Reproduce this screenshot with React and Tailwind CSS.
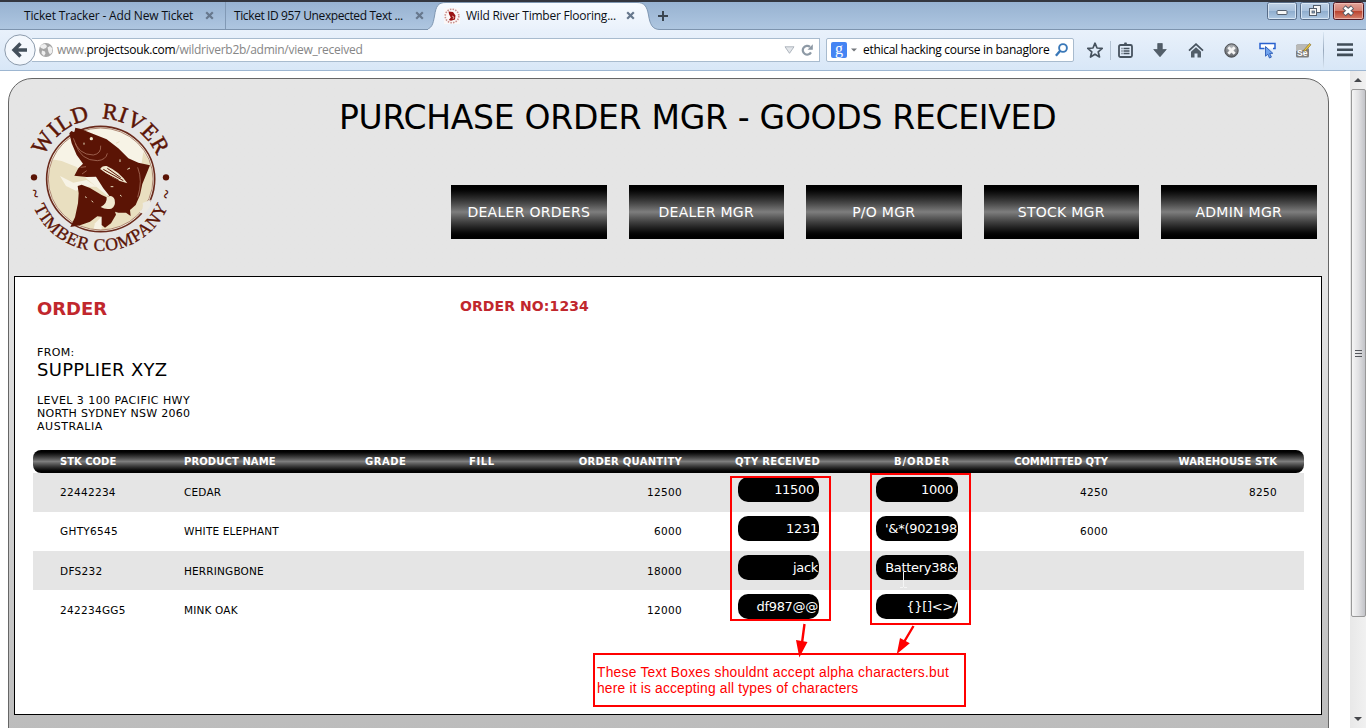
import React from "react";

const UI = "font-['Open_Sans','Noto_Sans',sans-serif]";

function CloseX({ className = "" }) {
  return (
    <svg className={"shrink-0 " + className} width="9" height="9" viewBox="0 0 9 9">
      <path d="M1.2 1.2 7.8 7.8M7.8 1.2 1.2 7.8" stroke="#67788d" strokeWidth="2.2" />
    </svg>
  );
}

function Favicon() {
  return (
    <svg width="16" height="16" viewBox="0 0 16 16" className="shrink-0">
      <rect width="16" height="16" fill="#fbf8f8" />
      <circle cx="8" cy="8" r="6.8" fill="none" stroke="#c98f8d" strokeWidth="1.6" strokeDasharray="1.5 1.2" />
      <path d="M4.5 3.5 9 4l2.5 3.5-.5 4-4 1.2-2.2-.7 2-2.6-1.6-2.8z" fill="#9b1313" />
      <path d="M8 8l2 1-1 2" stroke="#e7c0b8" fill="none" strokeWidth=".8" />
    </svg>
  );
}

function TabBar() {
  return (
    <div className={"flex h-[30px] shrink-0 items-center border-t-2 border-b border-t-[#33363f] border-b-[#7d94ae] bg-linear-to-b from-[#97b2d1] to-[#aec6e0] text-[12px] text-[#0b0f15] " + UI}>
      <div className="flex h-full w-[226px] items-center border-r border-[#8199b5] pl-6">
        <span className="w-[181px] whitespace-nowrap tracking-[-0.16px]">Ticket Tracker - Add New Ticket</span>
        <CloseX />
      </div>
      <div className="flex h-full w-[202px] items-center pl-2">
        <span className="w-[181px] whitespace-nowrap tracking-[-0.39px]">Ticket ID 957 Unexpected Text ...</span>
        <CloseX />
      </div>
      <div className="relative flex h-full w-[230px] items-center">
        <svg className="absolute left-0 top-[-1px]" width="232" height="29" viewBox="0 0 232 29">
          <defs>
            <linearGradient id="tabfill" x1="0" y1="0" x2="0" y2="1">
              <stop offset="0" stopColor="#f7fbff" />
              <stop offset="1" stopColor="#e9f1fb" />
            </linearGradient>
          </defs>
          <path d="M-4 28.5C4 28.5 5 23 6.500 15C8 5 10 1.500 18 1.500H209C216 1.500 219 5 220.500 14C222 23 224 28.500 232 28.500V30H-4Z" fill="url(#tabfill)" stroke="#7f97b2" />
          <path d="M2 29H226" stroke="#e9f1fb" strokeWidth="2" />
        </svg>
        <div className="relative flex items-center pl-4">
          <Favicon />
          <span className="w-[166px] whitespace-nowrap pl-[6px] tracking-[-0.23px]">Wild River Timber Flooring...</span>
          <CloseX />
        </div>
      </div>
      <svg width="10" height="10" viewBox="0 0 10 10" className="shrink-0">
        <path d="M5 0V10M0 5H10" stroke="#3b4651" strokeWidth="2" />
      </svg>
      <div className="ml-auto flex h-full items-start gap-[3px] pr-[2px]">
        <WinButton>
          <rect x="10" y="8.500" width="10" height="4" rx="1" fill="#f6f6f6" stroke="#545e6c" />
        </WinButton>
        <WinButton>
          <rect x="13.500" y="3.500" width="7" height="7" fill="#f6f6f6" stroke="#545e6c" />
          <rect x="9.500" y="6.500" width="7" height="7" fill="#f6f6f6" stroke="#545e6c" />
          <rect x="12" y="9" width="2.500" height="2" fill="#8ba5c3" stroke="#545e6c" strokeWidth=".8" />
        </WinButton>
        <svg width="31" height="18" viewBox="0 0 31 18">
          <defs>
            <linearGradient id="closefill" x1="0" y1="0" x2="0" y2="1">
              <stop offset="0" stopColor="#e5a79d" />
              <stop offset=".48" stopColor="#d27f72" />
              <stop offset=".5" stopColor="#b9412d" />
              <stop offset="1" stopColor="#d98674" />
            </linearGradient>
          </defs>
          <rect x=".5" y=".5" width="30" height="17" rx="2" fill="url(#closefill)" stroke="#4d1722" />
          <rect x="1.500" y="1.500" width="28" height="15" rx="1" fill="none" stroke="#f2c9c2" strokeOpacity=".7" />
          <path d="M11 5 19.500 12.500M19.500 5 11 12.500" stroke="#535965" strokeWidth="4.800" />
          <path d="M11.500 5.500 19 12M19 5.500 11.500 12" stroke="#fff" strokeWidth="2.800" />
        </svg>
      </div>
    </div>
  );
}

function WinButton({ children }) {
  return (
    <svg width="30" height="18" viewBox="0 0 30 18">
      <defs>
        <linearGradient id="winfill" x1="0" y1="0" x2="0" y2="1">
          <stop offset="0" stopColor="#c0d2e7" />
          <stop offset=".48" stopColor="#a9c1dc" />
          <stop offset=".5" stopColor="#8eaccd" />
          <stop offset="1" stopColor="#b1cae4" />
        </linearGradient>
      </defs>
      <rect x=".5" y=".5" width="29" height="17" rx="2" fill="url(#winfill)" stroke="#566b87" />
      <rect x="1.500" y="1.500" width="27" height="15" rx="1" fill="none" stroke="#e1ecf8" strokeOpacity=".8" />
      {children}
    </svg>
  );
}

function ToolIcons() {
  return (
    <div className="ml-[13px] flex h-full flex-1 items-center">
      <svg width="16" height="16" viewBox="0 0 16 16">
        <path d="M8 1.200 10 6l5.200.4-4 3.400 1.300 5.200L8 12.200 3.500 15l1.300-5.200-4-3.400L6 6z" fill="none" stroke="#46525e" strokeWidth="1.700" strokeLinejoin="round" />
      </svg>
      <div className="ml-[7px] h-[19px] w-px bg-[#b4c3d3]" />
      <svg className="ml-[7px]" width="15" height="16" viewBox="0 0 15 16">
        <rect x="1" y="3" width="13" height="12" rx="1.500" fill="none" stroke="#46525e" strokeWidth="1.800" />
        <path d="M4 3.500V2H6l.5-1.500h2L9 2h2v1.500z" fill="#46525e" />
        <path d="M3.500 6.500h1M5.500 6.500h6M3.500 9h1M5.500 9h6M3.500 11.500h1M5.500 11.500h6" stroke="#46525e" strokeWidth="1.400" />
      </svg>
      <svg className="ml-5" width="14" height="14" viewBox="0 0 14 14">
        <path d="M4.700.5h4.600v6h4L7 13.800.7 6.500h4z" fill="#525e69" stroke="#3b4652" strokeWidth=".6" />
      </svg>
      <svg className="ml-[21px]" width="16" height="15" viewBox="0 0 16 15">
        <path d="M1 7.600 8 1.200l7 6.400" stroke="#46525e" strokeWidth="1.800" fill="none" />
        <path d="M3 8.700 8 4.200l5 4.500V14.500H9.500v-4h-3v4H3z" fill="#525e69" />
      </svg>
      <svg className="ml-5" width="15" height="15" viewBox="0 0 15 15">
        <defs>
          <radialGradient id="ball" cx=".5" cy=".3" r=".7">
            <stop offset="0" stopColor="#b9bdc1" />
            <stop offset="1" stopColor="#5b5e63" />
          </radialGradient>
        </defs>
        <circle cx="7.500" cy="7.500" r="6.700" fill="url(#ball)" stroke="#4a4d51" />
        <path d="M4.300 4.300l6.400 6.400M10.700 4.300l-6.400 6.400" stroke="#f4f4f4" strokeWidth="2.800" />
      </svg>
      <svg className="ml-5" width="17" height="17" viewBox="0 0 17 17">
        <path d="M5.500 6.500H1v-5h15v5h-2" fill="#fff" stroke="#2a62cf" strokeWidth="1.500" />
        <path d="M6.500 4.500v9.700l2.300-2 1.700 3.800 1.900-.9-1.700-3.600 3.100-.2z" fill="#6fa3ee" stroke="#2a5ab5" strokeWidth=".9" />
      </svg>
      <svg className="ml-[19px]" width="17" height="16" viewBox="0 0 17 16">
        <rect x="1" y="2.500" width="13" height="13" rx="1.500" fill="#7d7d7d" />
        <path d="M1 4a1.500 1.500 0 0 1 1.500-1.500h10A1.500 1.500 0 0 1 14 4v3L1 9z" fill="#b9b9b7" />
        <text x="2" y="14" fontSize="8.500" fontWeight="bold" fontFamily="Liberation Sans, sans-serif" fill="#fff">Se</text>
        <path d="M8.500 8.500 14.500 1.500l1.500 1.300-6 6.500z" fill="#e9c53e" stroke="#7b6325" strokeWidth=".6" />
      </svg>
      <div className="ml-[11px] h-[37px] w-px bg-linear-to-b from-[#dce8f5] via-[#98a9bd] to-[#dce8f5]" />
      <svg className="ml-[13px]" width="16" height="14" viewBox="0 0 16 14">
        <path d="M0 1.500h16M0 6.700h16M0 11.900h16" stroke="#414d58" strokeWidth="2.600" />
      </svg>
    </div>
  );
}

function NavBar() {
  return (
    <div className={"flex h-[41px] shrink-0 items-center border-b border-[#9db6d1] bg-linear-to-b from-[#e9f1fb] to-[#d8e7f7] text-[12px] " + UI}>
      <svg className="relative ml-1 shrink-0" width="32" height="32" viewBox="0 0 32 32">
        <circle cx="16" cy="16" r="15.200" fill="#f4f8fd" stroke="#8c9bac" />
        <path d="M23 16H11M16.500 9.500 10 16l6.500 6.500" fill="none" stroke="#434f5b" strokeWidth="3.400" />
      </svg>
      <div className="-ml-1 flex h-6 w-[788px] shrink-0 items-center border border-l-0 border-[#a8bbce] bg-white pl-[6px] text-[#868686]">
        <svg width="16" height="16" viewBox="0 0 16 16" className="mr-[3px] shrink-0">
          <circle cx="8" cy="8" r="7" fill="#a5a5a5" />
          <path d="M4 2.500 7 2l2 2-1 2-2.500 1L3 6l-1-1.500zM9.500 5.500 12 4l2.500 2.500-.5 4-2 2-1.500-2.500zM4 8.500l3 1 .5 2L6 14l-2.500-2.500z" fill="#efefef" />
        </svg>
        <span className="whitespace-nowrap tracking-[-0.4px]">www.</span>
        <span className="whitespace-nowrap tracking-[-0.28px] text-black">projectsouk.com</span>
        <span className="whitespace-nowrap tracking-[-0.27px]">/wildriverb2b/admin/view_received</span>
        <svg className="ml-auto" width="11" height="8" viewBox="0 0 11 8">
          <path d="M1 .8h9L5.500 7.300z" fill="#e3e6ea" stroke="#a7afb8" strokeWidth=".9" />
        </svg>
        <svg className="ml-[6px] mr-[5px]" width="13" height="12" viewBox="0 0 13 12">
          <path d="M10 8.400A4.400 4.400 0 1 1 9 2.800" fill="none" stroke="#8d99a5" strokeWidth="2.200" />
          <path d="M11.800.3v5.400H6.500z" fill="#8d99a5" />
        </svg>
      </div>
      <div className="ml-[6px] flex h-6 w-[248px] shrink-0 items-center rounded-[2px] border border-[#a8bbce] bg-white pl-1">
        <span className="flex h-4 w-4 items-center justify-center rounded-[2px] bg-[#4484f3] pb-[3px] font-['Liberation_Serif',serif] text-[16px] leading-none text-white">g</span>
        <svg className="ml-1 mr-[6px]" width="6" height="4" viewBox="0 0 6 4"><path d="M0 .5h6L3 3.500z" fill="#73777c" /></svg>
        <span className="whitespace-nowrap tracking-[-0.3px] text-black">ethical hacking course in banaglore</span>
        <svg className="ml-auto mr-[5px]" width="13" height="14" viewBox="0 0 13 14">
          <circle cx="8" cy="5" r="3.900" fill="#fff" stroke="#3a78b8" strokeWidth="1.900" />
          <path d="M5.200 7.800.9 12.700" stroke="#3a78b8" strokeWidth="2.400" />
        </svg>
      </div>
      <ToolIcons />
    </div>
  );
}

function Logo() {
  return (
    <svg className="shrink-0" width="190" height="190" viewBox="0 0 570 570">
      <defs>
        <path id="arcTop" d="M89 350L89 297A183 181 0 0 1 455 297L455 350" />
        <path id="arcBottom" d="M53 297A219 216 0 0 0 491 297" />
        <clipPath id="disc"><ellipse cx="272" cy="297" rx="155" ry="152" /></clipPath>
      </defs>
      <ellipse cx="272" cy="297" rx="162" ry="158" fill="#f7f3e6" stroke="#6a2a1c" strokeWidth="5" />
      <g clipPath="url(#disc)">
        <path d="M110 235l45 8 45 18 30 35 60 50 90 0 20-130 40 60v120l-90 70-60-10-30 10-90 10-80-100z" fill="#e9dfc0" />
        <path d="M150 288l40 20 40-8 30 20-30 0-32 12-30-14z" fill="#f7f3e6" />
        <path d="M255 430l20-20 0 40h-25z" fill="#f7f3e6" />
      </g>
      <ellipse cx="272" cy="297" rx="157" ry="153" fill="none" stroke="#8a5038" strokeWidth="2" />
      <path d="M178 160L184 153L193 157L196 143L213 147L235 156L290 178L325 205L355 235L385 248L420 256L408 285L397 312L390 345L377 375L360 390L362 408L348 398L325 398L315 395L318 404L303 430L285 443L275 435L275 410L262 409L240 425L210 436L181 441L195 412L204 370L206 340L203 318L215 314L240 324L275 345L290 352L298 347L280 325L258 290L230 291L193 287L205 265L219 251L200 225L185 190Z" fill="#5b1405" />
      <path d="M290 351q18-8 24 8 4 20-10 27-18 4-32-5 20-10 18-30z" fill="#f0e8cf" />
      <path d="M270 268q6-12 20-10 40 18 62 52-40-8-80-42z" fill="#f0e8cf" />
      <path d="M280 268l60 34M276 275l50 26M292 265l40 28" stroke="#5b1405" strokeWidth="3" />
      <path d="M190 175q14 50 60 50 24-4 22-28M196 190q16 52 66 52 26-2 30-22M383 262q16 40 0 90M212 262l16-2M230 272l-14 10" fill="none" stroke="#b98470" strokeWidth="2" />
      <circle cx="244" cy="176" r="5" fill="#f0e8cf" />
      <path d="M222 188v6M318 190l10-5M330 238v8M302 320h8M276 340l4 5M352 268l8-4M225 350l5 3M245 362l4 5M330 345l5 4" stroke="#e9dfc0" strokeWidth="3" />
      <path d="M388 395q14-8 10-26l24-10q4 24-22 44z" fill="#ece9e2" />
      <circle cx="72" cy="292" r="9.500" fill="#5b1405" />
      <circle cx="468" cy="292" r="9.500" fill="#5b1405" />
      <g fill="#5b1405" fontFamily="Liberation Serif, serif">
        <text fontSize="68" textLength="430" wordSpacing="16" stroke="#5b1405" strokeWidth="1.500"><textPath href="#arcTop" startOffset="123" textLength="430">WILD RIVER</textPath></text>
        <text fontSize="53" textLength="508" stroke="#5b1405" strokeWidth="1"><textPath href="#arcBottom" startOffset="88" textLength="508">TIMBER COMPANY</textPath></text>
        <text fontSize="50" fontWeight="bold" transform="translate(57 332) rotate(75)">~</text>
        <text fontSize="50" fontWeight="bold" transform="translate(481 359) rotate(-75)">~</text>
      </g>
    </svg>
  );
}

const NAV = ["DEALER ORDERS", "DEALER MGR", "P/O MGR", "STOCK MGR", "ADMIN MGR"];

function Header() {
  return (
    <header className="flex h-[197px] pl-px pt-px">
      <Logo />
      <div className="flex-1">
        <h1 className="mt-[16px] h-[44px] whitespace-nowrap pl-[139px] text-[33px] leading-[44px] tracking-[-0.28px] text-black">PURCHASE ORDER MGR - GOODS RECEIVED</h1>
        <nav className="mt-[45px] flex gap-[22px] pl-[251px]">
          {NAV.map((n) => (
            <a key={n} className="flex h-[54px] w-[155.5px] items-center justify-center bg-linear-to-b from-black via-[#7e7e7e] to-black text-[14px] tracking-[0.28px] text-white">{n}</a>
          ))}
        </nav>
      </div>
    </header>
  );
}

const COLS = "grid grid-cols-[124px_181px_104px_60px_153px_138px_138px_150px_169px] pl-[27px]";
const ROWS = [
  ["22442234", "CEDAR", "12500", "11500", "1000", "4250", "8250", true],
  ["GHTY6545", "WHITE ELEPHANT", "6000", "1231", "'&*(902198", "6000", "", false],
  ["DFS232", "HERRINGBONE", "18000", "jack", "Battery38&", "", "", false],
  ["242234GG5", "MINK OAK", "12000", "df987@@", "{}[]<>/", "", "", false],
];

function Pill({ value, padded, wide }) {
  return (
    <div className={"mt-1 flex h-[25px] items-center justify-end overflow-hidden whitespace-nowrap rounded-[10px] bg-black text-[13px] tracking-[-0.3px] text-white " + (wide ? "w-[82px] " : "w-[81px] ") + (padded ? "pr-[5px]" : "pr-[1px]")}>
      {value}
    </div>
  );
}

function StockTable() {
  return (
    <div className="ml-[18px] w-[1271px]">
      <div className={"h-[23px] items-center rounded-[8px] bg-linear-to-b from-black via-[#7e7e7e] to-black text-[10px] font-bold text-white " + COLS}>
        <span>STK CODE</span>
        <span className="tracking-[0.1px]">PRODUCT NAME</span>
        <span className="tracking-[0.5px]">GRADE</span>
        <span className="tracking-[0.6px]">FILL</span>
        <span className="text-right tracking-[0.27px]">ORDER QUANTITY</span>
        <span className="text-right tracking-[0.3px]">QTY RECEIVED</span>
        <span className="pr-[8px] text-right tracking-[0.8px]">B/ORDER</span>
        <span className="text-right tracking-[-0.05px]">COMMITTED QTY</span>
        <span className="text-right tracking-[0.1px]">WAREHOUSE STK</span>
      </div>
      {ROWS.map(([code, name, qty, rec, back, com, stk, pad], i) => (
        <div key={code} className={"h-[39px] text-[10.5px] tracking-[0.3px] odd:bg-white even:bg-[#e5e5e5] " + (i > 1 ? "leading-[41px] " : "leading-[39px] ") + COLS}>
          <span>{code}</span>
          <span className="tracking-[0.17px]">{name}</span>
          <span />
          <span />
          <span className="text-right">{qty}</span>
          <div className="flex justify-end pr-[1px]"><Pill value={rec} padded={pad} /></div>
          <div className="flex justify-end"><Pill value={back} padded={pad} wide /></div>
          <span className="text-right">{com}</span>
          <span className="text-right">{stk}</span>
        </div>
      ))}
    </div>
  );
}

function Panel() {
  return (
    <section className="ml-[5px] h-[439px] w-[1308px] border border-black bg-white text-black">
      <div className="flex h-[173px] pl-[22px] pt-[19px]">
        <div className="w-[423px]">
          <h2 className="pt-px text-[18px] font-bold leading-[24px] tracking-[-0.05px] text-[#c1272d]">ORDER</h2>
          <p className="mt-[25px] text-[11px] leading-[14px] tracking-[0.35px]">FROM:</p>
          <p className="-mt-px text-[18px] leading-[22px] tracking-[0.3px]">SUPPLIER XYZ</p>
          <div className="mt-[13px] text-[11px] leading-[13px]">
            <p className="tracking-[0.44px]">LEVEL 3 100 PACIFIC HWY</p>
            <p className="tracking-[0.28px]">NORTH SYDNEY NSW 2060</p>
            <p className="tracking-[0.55px]">AUSTRALIA</p>
          </div>
        </div>
        <h3 className="text-[14px] font-bold leading-[20px] tracking-[0.09px] text-[#c1272d]">ORDER NO:1234</h3>
      </div>
      <StockTable />
    </section>
  );
}

function ScrollBar() {
  return (
    <div className="flex w-4 shrink-0 flex-col items-center bg-linear-to-r from-[#e8e8e8] to-[#f1f1f1]">
      <svg className="mt-[7px]" width="8" height="4" viewBox="0 0 8 4"><path d="M4 0l4 4H0z" fill="#45474b" /></svg>
      <div className="mt-[7px] flex h-[528px] w-[15px] items-center justify-center rounded-[2px] border border-[#989898] bg-linear-to-r from-[#f5f5f5] via-[#e1e1e3] to-[#c2c3c8]">
        <svg width="7" height="8" viewBox="0 0 7 8"><path d="M0 1.500h7M0 4.500h7M0 7.500h7" stroke="#55575c" /></svg>
      </div>
      <svg className="mt-auto mb-[7px]" width="8" height="4" viewBox="0 0 8 4"><path d="M0 0h8L4 4z" fill="#45474b" /></svg>
    </div>
  );
}

function Annotations() {
  return (
    <>
      <div className="absolute left-[730px] top-[476px] h-[145px] w-[101px] border-2 border-[#f00]" />
      <div className="absolute left-[870px] top-[473px] h-[152px] w-[101px] border-2 border-[#f00]" />
      <div className="absolute left-[593px] top-[653px] h-[54px] w-[373px] whitespace-nowrap border-2 border-[#f00] bg-white pl-[2px] pt-[10px] font-['Liberation_Sans',Arial,sans-serif] text-[13.8px] leading-[16px] text-[#f00]">
        <p className="tracking-[0.25px]">These Text Boxes shouldnt accept alpha characters.but</p>
        <p className="tracking-[0.19px]">here it is accepting all types of characters</p>
      </div>
      <svg className="absolute left-[790px] top-[620px]" width="130" height="40" viewBox="790 620 130 40">
        <path d="M804.500 624 802 643M913.500 626 904 642" stroke="#f00" strokeWidth="2.400" />
        <path d="M796 640l11.500 2-8.200 15.500zM900 638l9.800 5.200-13 10.800z" fill="#f00" />
      </svg>
      <svg className="absolute left-[899px] top-[570px]" width="9" height="19" viewBox="0 0 9 19">
        <path d="M4.500 2V17M1 17.500h3M5 17.500h3" stroke="#f5f5f5" />
      </svg>
    </>
  );
}

export default function App() {
  return (
    <div className="relative flex h-[728px] w-[1366px] flex-col overflow-hidden bg-white font-['DejaVu_Sans',Verdana,sans-serif]">
      <TabBar />
      <NavBar />
      <div className="flex min-h-0 flex-1">
        <div className="min-w-0 flex-1 overflow-hidden pl-2 pt-[7px]">
          <main className="h-[700px] w-[1321px] rounded-t-[24px] border border-[#666] bg-linear-to-b from-[#e5e5e5] from-28% to-[#b8b8b8]">
            <Header />
            <Panel />
          </main>
        </div>
        <ScrollBar />
      </div>
      <Annotations />
    </div>
  );
}
